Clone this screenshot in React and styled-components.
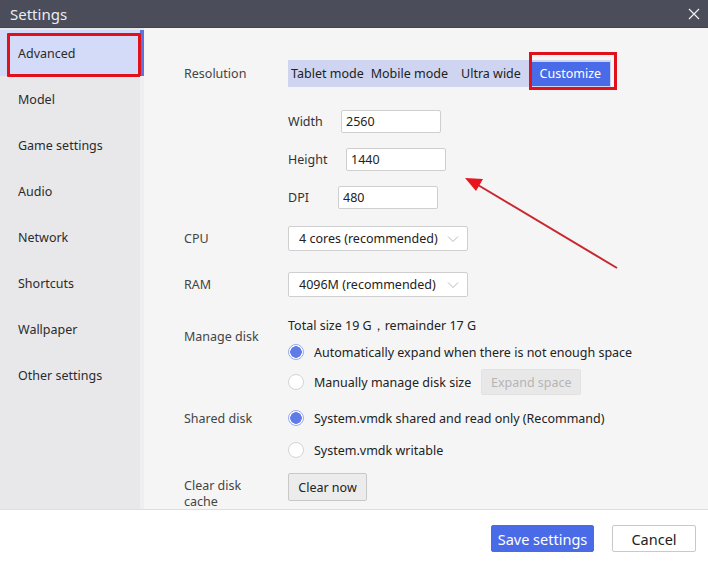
import React from "react";
import styled, { createGlobalStyle, css } from "styled-components";

const Global = createGlobalStyle`
  html, body { margin: 0; padding: 0; }
  body { width: 708px; height: 562px; overflow: hidden; font-family: "Noto Sans", "Open Sans", sans-serif; color: #333; }
  * { box-sizing: border-box; }
`;

const Window = styled.div`
  position: relative;
  width: 708px;
  height: 562px;
  display: flex;
  flex-direction: column;
  background: #f5f5f6;
`;

const TitleBar = styled.div`
  height: 28px;
  flex: none;
  background: #4b4d5b;
  border-bottom: 1px solid #42444f;
  display: flex;
  align-items: center;
  justify-content: space-between;
  padding: 0 8px 0 10px;
  color: #ececf0;
  font-size: 15px;
`;

const Body = styled.div`
  height: 481px;
  flex: none;
  display: flex;
  align-items: stretch;
  overflow: hidden;
`;

const Sidebar = styled.nav`
  width: 144px;
  height: 100%;
  flex: none;
  background: #e8e8eb;
  display: flex;
  flex-direction: column;
  padding-top: 2px;
`;

const NavItem = styled.div`
  position: relative;
  height: 46px;
  flex: none;
  display: flex;
  align-items: center;
  padding-left: 18px;
  font-size: 12.5px;
  color: #2b2b2b;
  border-right: 4px solid #efeff1;
  ${(p) =>
    p.$active &&
    css`
      background: #d3dbf8;
      border-right-color: #5b75df;
    `}
  ${(p) =>
    p.$marked &&
    css`
      &::after {
        content: "";
        position: absolute;
        left: 7px;
        top: 3px;
        width: 128px;
        height: 38px;
        border: 3px solid #e0101c;
        border-radius: 1px;
      }
    `}
`;

const Filler = styled.div`
  flex: 1;
  border-right: 4px solid #efeff1;
`;

const Content = styled.div`
  flex: 1;
  overflow: hidden;
  padding: 32px 0 0 40px;
  display: flex;
  flex-direction: column;
`;

const Row = styled.div`
  display: flex;
  align-items: ${(p) => p.$align || "center"};
  margin-bottom: ${(p) => p.$mb || 0}px;
`;

const Label = styled.div`
  width: 104px;
  flex: none;
  font-size: 12.5px;
  color: #444;
  line-height: 16px;
  padding-top: ${(p) => p.$pt || 0}px;
`;

const Segmented = styled.div`
  display: flex;
  align-items: center;
  height: 27px;
  background: #cfd5f1;
  padding: 0 1px 0 3px;
  font-size: 12.5px;
  color: #222;
  white-space: nowrap;
`;

const Segment = styled.div`
  position: relative;
  height: 24px;
  display: flex;
  align-items: center;
  justify-content: center;
  margin-left: ${(p) => p.$ml || 0}px;
  ${(p) =>
    p.$selected &&
    css`
      background: #4a6be8;
      color: #fff;
      width: 79px;
    `}
  ${(p) =>
    p.$marked &&
    css`
      &::after {
        content: "";
        position: absolute;
        left: -2px;
        top: -10px;
        right: -7px;
        bottom: -4px;
        border: 3px solid #e0101c;
      }
    `}
`;

const Sub = styled.div`
  display: flex;
  flex-direction: column;
  gap: 15px;
  margin: 23px 0 17px 104px;
`;

const SubRow = styled.div`
  display: flex;
  align-items: center;
  font-size: 12.5px;
  color: #333;
`;

const SubLabel = styled.span`
  width: ${(p) => p.$w}px;
  flex: none;
`;

const TextInput = styled.div`
  width: 100px;
  height: 23px;
  background: #fff;
  border: 1px solid #cfcfcf;
  border-radius: 2px;
  display: flex;
  align-items: center;
  padding-left: 4px;
  font-size: 12.5px;
  color: #222;
`;

const Select = styled.div`
  width: 180px;
  height: 25px;
  background: #fff;
  border: 1px solid #cfcfcf;
  border-radius: 2px;
  display: flex;
  align-items: center;
  justify-content: space-between;
  padding: 0 8px 0 10px;
  font-size: 12.5px;
  color: #222;
`;

const Column = styled.div`
  display: flex;
  flex-direction: column;
  gap: ${(p) => p.$gap || 0}px;
`;

const Text = styled.div`
  font-size: 12.5px;
  color: #222;
  line-height: 18px;
`;

const RadioLine = styled.label`
  display: flex;
  align-items: center;
  height: ${(p) => p.$h || 18}px;
  font-size: 12.5px;
  color: #222;
  gap: 10px;
  white-space: nowrap;
`;

const Radio = styled.span`
  width: 16px;
  height: 16px;
  border-radius: 50%;
  flex: none;
  background: #fff;
  border: 1px solid #d4d4d4;
  ${(p) =>
    p.$checked &&
    css`
      border: 1px solid #9aabf0;
      background: radial-gradient(circle, #5f7be8 0 5.5px, #fff 6px);
    `}
`;

const Button = styled.div`
  height: ${(p) => p.$h || 27}px;
  width: ${(p) => p.$w}px;
  flex: none;
  display: inline-flex;
  align-items: center;
  justify-content: center;
  white-space: nowrap;
  font-size: ${(p) => p.$fs || 12.5}px;
  border-radius: 2px;
  border: 1px solid #c8c8c8;
  background: #ececec;
  color: #222;
  ${(p) =>
    p.$disabled &&
    css`
      background: #e8e8e8;
      border-color: #e2e2e2;
      color: #b5b5b5;
    `}
  ${(p) =>
    p.$primary &&
    css`
      background: #4a6be8;
      border-color: #4a6be8;
      color: #fff;
    `}
  ${(p) =>
    p.$white &&
    css`
      background: #fff;
      border-color: #c9c9c9;
    `}
`;

const Footer = styled.div`
  height: 53px;
  flex: none;
  background: #fff;
  border-top: 1px solid #dedede;
  display: flex;
  align-items: center;
  justify-content: flex-end;
  gap: 18px;
  padding: 5px 12px 0 0;
`;

const Arrow = styled.svg`
  position: absolute;
  left: 0;
  top: 0;
  pointer-events: none;
`;

const Chevron = () => (
  <svg width="12" height="8" viewBox="0 0 12 8">
    <path d="M1 1.5 L6 6.5 L11 1.5" fill="none" stroke="#b9b9b9" strokeWidth="1" />
  </svg>
);

const Close = () => (
  <svg width="12" height="12" viewBox="0 0 12 12">
    <path d="M1 1 L11 11 M11 1 L1 11" stroke="#f0f0f0" strokeWidth="1.2" />
  </svg>
);

const nav = ["Advanced", "Model", "Game settings", "Audio", "Network", "Shortcuts", "Wallpaper", "Other settings"];

export default function App() {
  return (
    <>
      <Global />
      <Window>
        <TitleBar>
          <span>Settings</span>
          <Close />
        </TitleBar>
        <Body>
          <Sidebar>
            {nav.map((n, i) => (
              <NavItem key={n} $active={i === 0} $marked={i === 0}>
                {n}
              </NavItem>
            ))}
            <Filler />
          </Sidebar>
          <Content>
            <Row>
              <Label>Resolution</Label>
              <Segmented>
                <Segment>Tablet mode</Segment>
                <Segment $ml={7}>Mobile mode</Segment>
                <Segment $ml={13}>Ultra wide</Segment>
                <Segment $ml={10} $selected $marked>Customize</Segment>
              </Segmented>
            </Row>
            <Sub>
              <SubRow>
                <SubLabel $w={53}>Width</SubLabel>
                <TextInput>2560</TextInput>
              </SubRow>
              <SubRow>
                <SubLabel $w={58}>Height</SubLabel>
                <TextInput>1440</TextInput>
              </SubRow>
              <SubRow>
                <SubLabel $w={50}>DPI</SubLabel>
                <TextInput>480</TextInput>
              </SubRow>
            </Sub>
            <Row $mb={21}>
              <Label>CPU</Label>
              <Select>
                <span>4 cores (recommended)</span>
                <Chevron />
              </Select>
            </Row>
            <Row $mb={20}>
              <Label>RAM</Label>
              <Select>
                <span>4096M (recommended)</span>
                <Chevron />
              </Select>
            </Row>
            <Row $mb={14} $align="flex-start">
              <Label $pt={12}>Manage disk</Label>
              <Column $gap={8}>
                <Text>Total size 19 G，remainder 17 G</Text>
                <RadioLine>
                  <Radio $checked />
                  Automatically expand when there is not enough space
                </RadioLine>
                <RadioLine $h={26}>
                  <Radio />
                  Manually manage disk size
                  <Button $disabled $w={100} $h={26}>Expand space</Button>
                </RadioLine>
              </Column>
            </Row>
            <Row $mb={14} $align="flex-start">
              <Label $pt={2}>Shared disk</Label>
              <Column $gap={14}>
                <RadioLine>
                  <Radio $checked />
                  System.vmdk shared and read only (Recommand)
                </RadioLine>
                <RadioLine>
                  <Radio />
                  System.vmdk writable
                </RadioLine>
              </Column>
            </Row>
            <Row $align="flex-start">
              <Label $pt={5}>Clear disk<br />cache</Label>
              <Button $w={79} $h={28}>Clear now</Button>
            </Row>
          </Content>
        </Body>
        <Footer>
          <Button $primary $h={27} $w={103} $fs={14.5}>Save settings</Button>
          <Button $white $h={27} $w={84} $fs={14.5}>Cancel</Button>
        </Footer>
        <Arrow width="708" height="562" viewBox="0 0 708 562">
          <line x1="617" y1="268" x2="478" y2="185" stroke="#c8282e" strokeWidth="2" />
          <polygon points="465,178 483,179 476,191" fill="#e8141e" />
        </Arrow>
      </Window>
    </>
  );
}
